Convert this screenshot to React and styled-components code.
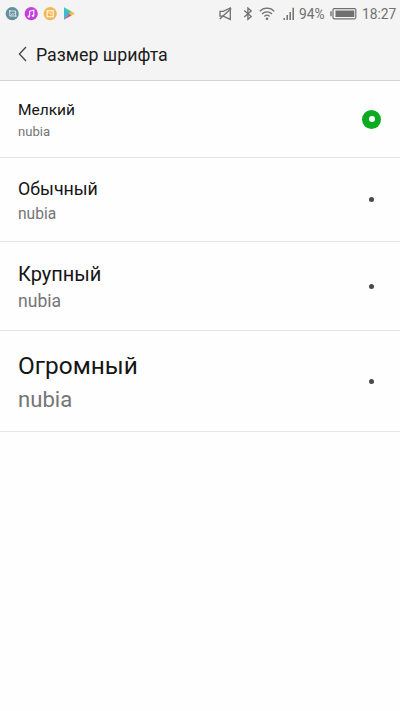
import React, { useState } from 'react';
import styled, { createGlobalStyle } from 'styled-components';

const GlobalStyle = createGlobalStyle`
  body {
    margin: 0;
    background: #fefefe;
    font-family: Roboto, "Noto Sans", sans-serif;
  }
`;

const Screen = styled.div`
  display: flex;
  flex-direction: column;
  min-height: 711px;
  background: #fefefe;
`;

const Top = styled.header`
  background: #f4f4f4;
  border-bottom: 1px solid #d4d4d4;
`;

const StatusBar = styled.div`
  display: flex;
  align-items: center;
  justify-content: space-between;
  height: 28px;
  padding: 0 5px;
  box-sizing: border-box;
  color: #707070;
`;

const Apps = styled.div`
  display: flex;
  align-items: center;
  gap: 5px;

  svg {
    display: block;
  }
`;

const Status = styled.div`
  display: flex;
  align-items: center;

  svg {
    display: block;
  }
`;

const StatusText = styled.span`
  font-size: 13.8px;
  line-height: 28px;
  margin-left: ${(p) => p.$gap}px;
  width: ${(p) => p.$width}px;
  white-space: nowrap;
`;

const Spacer = styled.span`
  width: ${(p) => p.$width}px;
`;

const TitleBar = styled.div`
  display: flex;
  align-items: center;
  height: 52px;
  padding-left: 18px;
`;

const BackButton = styled.button`
  display: flex;
  width: 18px;
  padding: 0;
  border: 0;
  background: none;
`;

const Title = styled.h1`
  margin: 0;
  padding-top: 1px;
  font-size: 17.8px;
  font-weight: 400;
  line-height: 24px;
  color: #1c1c1c;
`;

const Row = styled.div`
  display: flex;
  align-items: center;
  justify-content: space-between;
  box-sizing: border-box;
  height: ${(p) => p.$height}px;
  padding: 0 19px 0 18px;
  border-bottom: 1px solid #e6e6e6;
`;

const Labels = styled.div`
  display: flex;
  flex-direction: column;
  gap: ${(p) => p.$gap}px;
  padding-top: ${(p) => p.$top}px;
`;

const Name = styled.span`
  font-size: ${(p) => p.$size}px;
  line-height: 1.2;
  color: #151515;
`;

const Sample = styled.span`
  font-size: ${(p) => p.$size}px;
  line-height: 1.2;
  color: #757575;
`;

const Radio = styled.span`
  display: flex;
  align-items: center;
  justify-content: center;
  width: 19px;
  height: 19px;
  border-radius: 50%;
  background: ${(p) => (p.$checked ? '#0caa20' : 'transparent')};

  &::after {
    content: '';
    width: ${(p) => (p.$checked ? 6 : 5)}px;
    height: ${(p) => (p.$checked ? 6 : 5)}px;
    border-radius: 50%;
    background: ${(p) => (p.$checked ? '#fff' : '#484848')};
  }
`;

const SIZES = [
  { name: 'Мелкий', height: 77, size: 15.5, sample: 13.1, gap: 5, top: 3 },
  { name: 'Обычный', height: 84, size: 17.8, sample: 15.6, gap: 5, top: 3 },
  { name: 'Крупный', height: 89, size: 20, sample: 17.6, gap: 5.5, top: 2.5 },
  { name: 'Огромный', height: 101, size: 24.4, sample: 22.1, gap: 6, top: 2 },
];

function AppIcons() {
  return (
    <Apps>
      <svg width="14" height="14" viewBox="0 0 14 14" fill="none">
        <circle cx="7.2" cy="6.7" r="6.6" fill="#67909f" />
        <path d="M4 4H10.6V9.8M4.8 3V9H11.6M6 8.4L7.4 6.6L8.4 7.4L9.6 5.8" stroke="#d5e4ea" />
      </svg>
      <svg width="14" height="14" viewBox="0 0 14 14" fill="none">
        <circle cx="7.2" cy="6.7" r="6.6" fill="#c63ee2" />
        <path d="M5.6 9.4V4.2L9.8 3.3V8.6" stroke="#fff" strokeWidth="1.1" />
        <ellipse cx="4.8" cy="9.6" rx="1.3" ry="1.1" fill="#fff" />
        <ellipse cx="9" cy="8.8" rx="1.3" ry="1.1" fill="#fff" />
      </svg>
      <svg width="14" height="14" viewBox="0 0 14 14" fill="none">
        <circle cx="7.2" cy="6.7" r="6.6" fill="#f3b755" />
        <rect x="4.2" y="3.7" width="6" height="6" stroke="#fff3da" strokeWidth="1.3" />
        <path d="M5.8 5.3L8.6 8.1M8.6 5.3L7.2 6.7" stroke="#fff3da" />
      </svg>
      <svg width="14" height="14" viewBox="0 0 14 14">
        <path d="M2 .2V12.8L8 6.5Z" fill="#42b7da" />
        <path d="M2 .2L9.5 4.5L7.7 6.7Z" fill="#45c98c" />
        <path d="M2 12.8L9.5 8.5L7.7 6.3Z" fill="#e64d68" />
        <path d="M9.2 4.3L13 6.5L9.2 8.7L7.3 6.5Z" fill="#efc149" />
      </svg>
    </Apps>
  );
}

function StatusIcons() {
  return (
    <Status>
      <svg width="13" height="14" viewBox="0 0 13 14" fill="none" stroke="currentColor" strokeWidth="1.3">
        <path d="M1 4.4H4.2L11.3 1V12.4L4.2 9.1H1Z" />
        <path d="M.7 12L12.2 1.6" />
      </svg>
      <Spacer $width={11} />
      <svg width="10" height="14" viewBox="0 0 10 14" fill="none" stroke="currentColor" strokeWidth="1.3">
        <path d="M1.2 3.6L8.2 9.6L4.9 12.4V1L8.2 4L1.2 10" />
      </svg>
      <Spacer $width={6} />
      <svg width="16" height="14" viewBox="0 0 16 14" fill="none" stroke="currentColor" strokeWidth="1.3">
        <path d="M.7 4.4C4.7.1 11.3.1 15.3 4.4M3 7C5.9 4.1 10.1 4.1 13 7M5.4 9.4C6.9 8 9.1 8 10.6 9.4" />
        <circle cx="8" cy="11.8" r="1.3" fill="currentColor" stroke="none" />
      </svg>
      <Spacer $width={8} />
      <svg width="12" height="14" viewBox="0 0 12 14" fill="none" stroke="currentColor" strokeWidth="1.5">
        <path d="M1.2 13V11M4.2 13V8M7.2 13V5M10.2 13V.7" />
      </svg>
      <StatusText $gap={4} $width={26}>94%</StatusText>
      <Spacer $width={5} />
      <svg width="27" height="12" viewBox="0 0 27 12" fill="none">
        <rect x="3" y=".6" width="22.8" height="10.2" rx="1.2" stroke="currentColor" strokeWidth="1.2" />
        <path d="M1 3.3V8.3" stroke="currentColor" strokeWidth="1.4" />
        <rect x="5.5" y="2.5" width="18.8" height="6.5" fill="currentColor" />
      </svg>
      <StatusText $gap={5} $width={33}>18:27</StatusText>
    </Status>
  );
}

export default function App() {
  const [selected, setSelected] = useState(0);

  return (
    <Screen>
      <GlobalStyle />
      <Top>
        <StatusBar>
          <AppIcons />
          <StatusIcons />
        </StatusBar>
        <TitleBar>
          <BackButton aria-label="Назад">
            <svg width="10" height="16" viewBox="0 0 10 16" fill="none">
              <path d="M8 1L1.4 8L8 15" stroke="#444" strokeWidth="1.3" />
            </svg>
          </BackButton>
          <Title>Размер шрифта</Title>
        </TitleBar>
      </Top>
      {SIZES.map((item, i) => (
        <Row key={item.name} $height={item.height} onClick={() => setSelected(i)}>
          <Labels $gap={item.gap} $top={item.top}>
            <Name $size={item.size}>{item.name}</Name>
            <Sample $size={item.sample}>nubia</Sample>
          </Labels>
          <Radio $checked={selected === i} />
        </Row>
      ))}
    </Screen>
  );
}
